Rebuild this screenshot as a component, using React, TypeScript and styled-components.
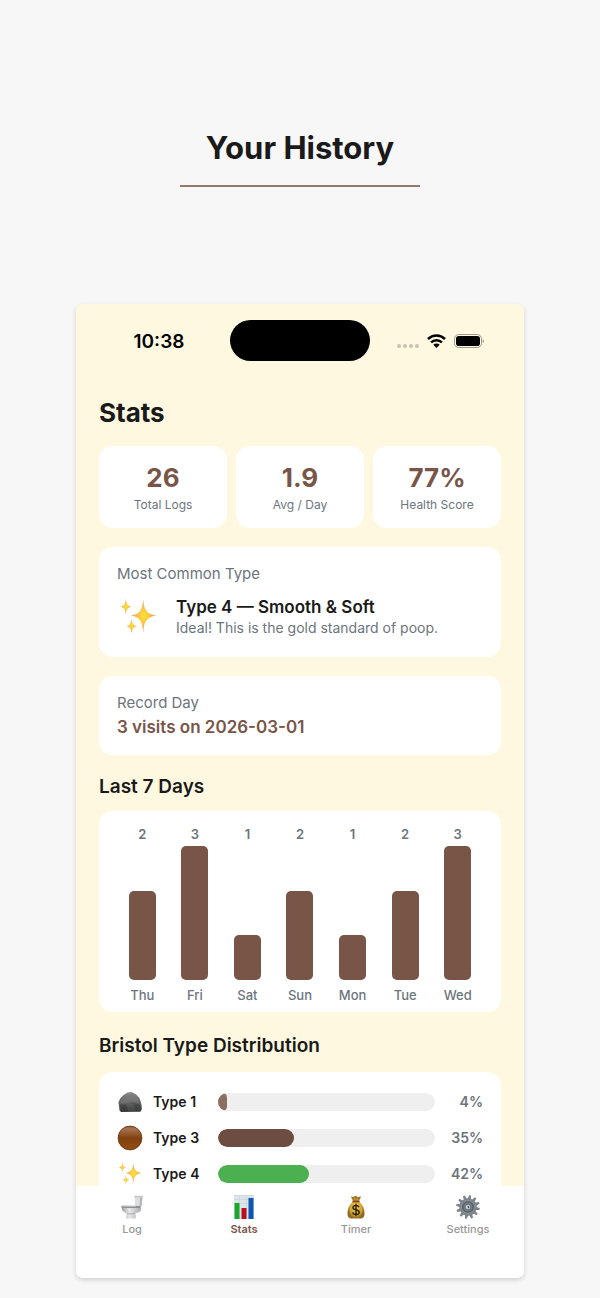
import React from 'react';
import styled, { createGlobalStyle } from 'styled-components';

const GlobalStyle = createGlobalStyle`
  *, *::before, *::after {
    box-sizing: border-box;
  }
  body {
    margin: 0;
    background: #f7f7f7;
    color: #1a1a1a;
    font-family: Inter, 'Liberation Sans', sans-serif;
  }
`;

const Page = styled.main`
  display: flex;
  flex-direction: column;
  align-items: center;
  min-height: 100vh;
  padding: 128px 76px 20px;
`;
const PageTitle = styled.h1`
  margin: 0;
  font-size: 31px;
  line-height: 40px;
  font-weight: 700;
`;
const Rule = styled.div`
  width: 240px;
  height: 2px;
  margin: 17px 0 117px;
  background: #95776b;
`;
const Phone = styled.section`
  width: 100%;
  max-width: 520px;
  border-radius: 7px;
  background: #fff8e1;
  box-shadow: 0 2px 5px rgba(0, 0, 0, 0.16);
  overflow: hidden;
`;

const StatusBar = styled.div`
  display: grid;
  grid-template-columns: 1fr 140px 1fr;
  align-items: center;
  padding-top: 16px;
`;
const Clock = styled.span`
  padding: 2px 0 0 12px;
  color: #000;
  font-size: 19px;
  line-height: 24px;
  font-weight: 600;
  text-align: center;
`;
const Island = styled.div`
  height: 41px;
  border-radius: 21px;
  background: #000;
`;
const StatusIcons = styled.div`
  display: flex;
  align-items: center;
  justify-content: flex-end;
  gap: 8px;
  padding-right: 40px;

  svg {
    display: block;
  }
`;

const Content = styled.div`
  padding: 36px 23px 0;
`;
const ScreenTitle = styled.h2`
  margin: 0 0 17px;
  font-size: 26px;
  line-height: 32px;
  font-weight: 700;
`;
const Summary = styled.div`
  display: grid;
  grid-template-columns: repeat(3, 1fr);
  gap: 9px;
`;
const SummaryCard = styled.div`
  display: flex;
  flex-direction: column;
  align-items: center;
  gap: 2px;
  padding: 16px 0 14px;
  border-radius: 14px;
  background: #fff;
`;
const SummaryValue = styled.strong`
  color: #795548;
  font-size: 26px;
  line-height: 32px;
  font-weight: 700;
`;
const SummaryLabel = styled.span`
  color: #6c757d;
  font-size: 12px;
  line-height: 18px;
`;

const Card = styled.div`
  margin-top: 19px;
  padding: 17px 18px;
  border-radius: 14px;
  background: #fff;
`;
const CardLabel = styled.div`
  color: #6c757d;
  font-size: 15px;
  line-height: 20px;
`;
const Common = styled.div`
  display: flex;
  align-items: center;
  gap: 17px;
  padding: 12px 0 2px;
`;
const CommonIcon = styled.div`
  display: flex;
  justify-content: center;
  width: 42px;

  svg {
    display: block;
  }
`;
const CommonTitle = styled.div`
  font-size: 17px;
  line-height: 22px;
  font-weight: 600;
`;
const CommonText = styled.div`
  color: #6c757d;
  font-size: 14px;
  line-height: 20px;
`;
const RecordText = styled.div`
  margin-top: 3px;
  color: #795548;
  font-size: 17px;
  line-height: 22px;
  font-weight: 600;
`;

const Heading = styled.h3<{ $space: number }>`
  margin: ${p => p.$space}px 0 ${p => p.$space - 8}px;
  font-size: 19px;
  line-height: 24px;
  font-weight: 600;
`;

const Chart = styled.div`
  display: grid;
  grid-template-columns: repeat(7, 1fr);
  padding: 15px 17px 9px;
  border-radius: 14px;
  background: #fff;
`;
const Day = styled.div`
  display: flex;
  flex-direction: column;
  align-items: center;
  color: #6c757d;
  font-size: 13px;
  line-height: 16px;
  font-weight: 500;
`;
const DayCount = styled.span`
  font-weight: 600;
`;
const Plot = styled.div`
  display: flex;
  align-items: flex-end;
  height: 134px;
  margin: 4px 0 7px;
`;
const Bar = styled.div`
  width: 27px;
  border-radius: 5px;
  background: #795548;
`;

const Distribution = styled.div`
  display: flex;
  flex-direction: column;
  gap: 12px;
  padding: 18px 18px 0;
  border-radius: 14px 14px 0 0;
  background: #fff;
`;
const TypeRow = styled.div`
  display: grid;
  grid-template-columns: 26px 55px 1fr 38px;
  grid-template-rows: 24px;
  gap: 10px;
  align-items: center;

  svg {
    display: block;
    margin: 0 auto;
  }
`;
const TypeName = styled.span`
  font-size: 14px;
  line-height: 20px;
  font-weight: 600;
  white-space: nowrap;
`;
const Track = styled.div`
  height: 18px;
  border-radius: 9px;
  background: #efefef;
  overflow: hidden;
`;
const Fill = styled.div<{ $color: string }>`
  height: 100%;
  border-radius: 9px;
  background: ${p => p.$color};
`;
const Percent = styled.span`
  color: #6c757d;
  font-size: 14px;
  line-height: 20px;
  font-weight: 600;
  text-align: right;
`;

const TabBar = styled.nav`
  display: grid;
  grid-template-columns: repeat(4, 1fr);
  padding: 9px 0 41px;
  background: #fff;
`;
const Tab = styled.button<{ $active?: boolean }>`
  display: flex;
  flex-direction: column;
  align-items: center;
  gap: 2px;
  padding: 0;
  border: 0;
  background: none;
  color: ${p => (p.$active ? '#795548' : '#999')};
  font-family: inherit;
  font-size: 11px;
  line-height: 16px;
  font-weight: ${p => (p.$active ? 600 : 500)};
  cursor: pointer;
`;

const SignalDots = () => (
  <svg width="22" height="14" viewBox="0 0 22 14" fill="#cbc3b0">
    <circle cx="2" cy="12" r="2" />
    <circle cx="8" cy="12" r="2" />
    <circle cx="14" cy="12" r="2" />
    <circle cx="20" cy="12" r="2" />
  </svg>
);

const Wifi = () => (
  <svg width="19" height="14" viewBox="0 0 19 14">
    <g fill="none" stroke="#000" strokeWidth="2.5">
      <path d="M1 5a12.200 12.200 0 0 1 17 0" />
      <path d="M4.100 8.400a7.700 7.700 0 0 1 10.800 0" />
    </g>
    <path d="M9.500 13.900L6.300 10.800a4.600 4.600 0 0 1 6.400 0z" />
  </svg>
);

const Battery = () => (
  <svg width="30" height="14" viewBox="0 0 30 14">
    <rect x=".5" y=".5" width="27" height="13" rx="4.2" fill="none" stroke="#9e9a8d" />
    <rect x="2" y="2" width="24" height="10" rx="2.8" />
    <path d="M28.7 4.9q1.3.7 1.3 2.1t-1.3 2.1z" fill="#9e9a8d" />
  </svg>
);

const Sparkles = ({ size }: { size: number }) => (
  <svg width={size} height={size} viewBox="0 0 40 40">
    <defs>
      <radialGradient id="spark">
        <stop offset="0" stopColor="#fbdf3c" />
        <stop offset=".35" stopColor="#fbcd3f" />
        <stop offset=".8" stopColor="#f2a566" />
        <stop offset="1" stopColor="#eea582" />
      </radialGradient>
    </defs>
    <g fill="url(#spark)">
      <path d="M25.500 1C26.300 11 28 16.800 39.500 18.500C28 20.200 26.300 26 25.500 36.500C24.700 26 23 20.200 12.500 18.500C23 16.800 24.700 11 25.500 1Z" />
      <path d="M7.200 .5C7.700 6 8.800 8.400 13.500 9.200C8.800 10 7.700 12.400 7.200 17.800C6.700 12.400 5.600 10 1.200 9.200C5.600 8.400 6.700 6 7.200 .5Z" />
      <path d="M13.200 21.500C13.700 26.500 14.800 28.900 19.500 29.700C14.800 30.500 13.700 32.900 13.200 37.500C12.700 32.900 11.600 30.500 7.500 29.700C11.600 28.900 12.700 26.500 13.200 21.500Z" />
    </g>
  </svg>
);

const Rock = () => (
  <svg width="24" height="24" viewBox="0 0 24 24">
    <defs>
      <linearGradient id="rock" x1="0" y1="0" x2="0" y2="1">
        <stop offset="0" stopColor="#8c8c8c" />
        <stop offset=".5" stopColor="#626262" />
        <stop offset="1" stopColor="#3e3f3f" />
      </linearGradient>
    </defs>
    <path d="M1 16L.4 12.300L2.500 8L5.500 5L9.500 2.400L13.500 2L18 4.200L21.500 8L23.500 14.500L23.900 19L22.500 21.800L3 22L1.500 20.500Z" fill="url(#rock)" />
    <path d="M1 13L7 13.500L15 12L22 13.500L20 8L15 4L8 7Z" fill="#7d7d7d" opacity=".5" />
    <path d="M2 15L8 14.500L10 21.500L4 21.500Z" fill="#303131" opacity=".5" />
    <path d="M15 13L22 15L22 21L18 21.500Z" fill="#343535" opacity=".4" />
  </svg>
);

const BrownCircle = () => (
  <svg width="26" height="26" viewBox="0 0 26 26">
    <defs>
      <linearGradient id="brown" x1="0" y1="0" x2="0" y2="1">
        <stop offset="0" stopColor="#8e5a39" />
        <stop offset=".12" stopColor="#a87350" />
        <stop offset=".5" stopColor="#80420f" />
        <stop offset="1" stopColor="#974b12" />
      </linearGradient>
    </defs>
    <circle cx="13" cy="13" r="11.900" fill="url(#brown)" stroke="#64310f" strokeWidth=".8" />
  </svg>
);

const Toilet = () => (
  <svg width="24" height="24" viewBox="0 0 24 24">
    <defs>
      <linearGradient id="bowl" x1="0" y1="0" x2="1" y2="0">
        <stop offset="0" stopColor="#9a9a9c" />
        <stop offset=".4" stopColor="#e8e8ea" />
        <stop offset="1" stopColor="#ababae" />
      </linearGradient>
    </defs>
    <path d="M15 1.500L22.500 1L21.500 11.500H15Z" fill="#dcdee1" />
    <path d="M14.300 .8H23.200V2.500H14.300Z" fill="#c6c8cc" />
    <path d="M20 2.500H22.500L21.500 11.500H19.500Z" fill="#b4b6ba" />
    <path d="M1.500 12.500H21V15Q20 17.500 15.500 18.300L16 23.500H6L6.800 18.500Q2.200 17 1.500 12.500Z" fill="url(#bowl)" />
    <path d="M7 18.500Q11 19.400 15 18.500" fill="none" stroke="#98989a" strokeWidth=".7" />
    <path d="M1.200 12Q1 10.600 3 10.500L20.500 11V13H3Q1.500 13 1.200 12Z" fill="#8f9093" />
    <path d="M3 11H16" stroke="#e7e7e9" strokeWidth=".9" />
  </svg>
);

const ChartIcon = () => (
  <svg width="24" height="24" viewBox="0 0 24 24">
    <rect x="2" y="0" width="20" height="24" fill="#dce4ea" />
    <path d="M2 .5H22M2 4.500H22M2 8.500H22M7.500 0V24M14.500 0V24" stroke="#c9d4dc" strokeWidth=".6" />
    <rect x="2.500" y="8" width="5" height="16" fill="#1ba72b" />
    <rect x="9.500" y="13" width="5" height="11" fill="#bd0b20" />
    <rect x="16.500" y="3" width="5" height="21" fill="#0c57b3" />
  </svg>
);

const MoneyBag = () => (
  <svg width="24" height="24" viewBox="0 0 24 24">
    <defs>
      <radialGradient id="bag">
        <stop offset="0" stopColor="#f0cf55" />
        <stop offset=".7" stopColor="#d0a332" />
        <stop offset="1" stopColor="#8e6820" />
      </radialGradient>
    </defs>
    <path d="M7 1.500L9.500 2L11.500 .8L14 2L17 1.500L15 6.500Q20.500 11 20.500 18.500Q20.500 23.500 16.500 23.500H7.500Q3.500 23.500 3.500 18.500Q3.500 11 9 6.500Z" fill="url(#bag)" />
    <path d="M8.500 2.500L10.500 6M12 2V6M15.500 2.500L13.500 6" stroke="#8a6224" strokeWidth=".8" />
    <path d="M8.500 6.500H15.500" stroke="#8b3a28" strokeWidth="1.600" />
    <path d="M15 12.200C14.500 10.900 13.300 10.500 12 10.500C10.200 10.500 9 11.400 9 12.700C9 15.600 15.200 13.900 15.200 17.200C15.200 18.700 13.800 19.500 12 19.500C10.300 19.500 9 18.900 8.700 17.400M12 8.800V21.200" fill="none" stroke="#33270e" strokeWidth="1.500" />
  </svg>
);

const teeth = Array.from({ length: 12 }, (_, i) => i * 30);

const Gear = () => (
  <svg width="24" height="24" viewBox="0 0 24 24">
    {teeth.map(angle => (
      <path key={angle} d="M10.300 4.500L11 .2H13L13.700 4.500Z" fill="#7d848c" transform={`rotate(${angle + 10} 12 12)`} />
    ))}
    <circle cx="12" cy="12" r="7.600" fill="#a9b0b6" stroke="#7b838b" strokeWidth="2.200" />
    <circle cx="12" cy="12" r="5.300" fill="#78818a" stroke="#555d66" strokeWidth="1.600" />
    <circle cx="12" cy="12" r="2.800" fill="#dde1e4" stroke="#48515b" strokeWidth=".8" />
    <path d="M11.500 10.200L13.700 12L11.800 13.800Z" fill="#39434d" />
  </svg>
);

const summary = [
  { value: '26', label: 'Total Logs' },
  { value: '1.9', label: 'Avg / Day' },
  { value: '77%', label: 'Health Score' },
];

const days = [
  { name: 'Thu', count: 2 },
  { name: 'Fri', count: 3 },
  { name: 'Sat', count: 1 },
  { name: 'Sun', count: 2 },
  { name: 'Mon', count: 1 },
  { name: 'Tue', count: 2 },
  { name: 'Wed', count: 3 },
];
const maxCount = 3;
const maxBarHeight = 134;

const types = [
  { name: 'Type 1', percent: 4, color: '#8d6e63', icon: <Rock /> },
  { name: 'Type 3', percent: 35, color: '#6d4c41', icon: <BrownCircle /> },
  { name: 'Type 4', percent: 42, color: '#4caf50', icon: <Sparkles size={24} /> },
];

const tabs = [
  { name: 'Log', icon: <Toilet /> },
  { name: 'Stats', icon: <ChartIcon />, active: true },
  { name: 'Timer', icon: <MoneyBag /> },
  { name: 'Settings', icon: <Gear /> },
];

export const App: React.FC = () => {

  return (
    <React.Fragment>
      <GlobalStyle />
      <Page>
        <PageTitle>Your History</PageTitle>
        <Rule />
        <Phone>
          <StatusBar>
            <Clock>10:38</Clock>
            <Island />
            <StatusIcons>
              <SignalDots />
              <Wifi />
              <Battery />
            </StatusIcons>
          </StatusBar>
          <Content>
            <ScreenTitle>Stats</ScreenTitle>
            <Summary>
              {summary.map(item => (
                <SummaryCard key={item.label}>
                  <SummaryValue>{item.value}</SummaryValue>
                  <SummaryLabel>{item.label}</SummaryLabel>
                </SummaryCard>
              ))}
            </Summary>
            <Card>
              <CardLabel>Most Common Type</CardLabel>
              <Common>
                <CommonIcon>
                  <Sparkles size={38} />
                </CommonIcon>
                <div>
                  <CommonTitle>Type 4 — Smooth &amp; Soft</CommonTitle>
                  <CommonText>Ideal! This is the gold standard of poop.</CommonText>
                </div>
              </Common>
            </Card>
            <Card>
              <CardLabel>Record Day</CardLabel>
              <RecordText>3 visits on 2026-03-01</RecordText>
            </Card>
            <Heading $space={20}>Last 7 Days</Heading>
            <Chart>
              {days.map(day => (
                <Day key={day.name}>
                  <DayCount>{day.count}</DayCount>
                  <Plot>
                    <Bar style={{ height: Math.round((maxBarHeight * day.count) / maxCount) }} />
                  </Plot>
                  {day.name}
                </Day>
              ))}
            </Chart>
            <Heading $space={22}>Bristol Type Distribution</Heading>
            <Distribution>
              {types.map(type => (
                <TypeRow key={type.name}>
                  {type.icon}
                  <TypeName>{type.name}</TypeName>
                  <Track>
                    <Fill $color={type.color} style={{ width: `${type.percent}%` }} />
                  </Track>
                  <Percent>{type.percent}%</Percent>
                </TypeRow>
              ))}
            </Distribution>
          </Content>
          <TabBar>
            {tabs.map(tab => (
              <Tab key={tab.name} type="button" $active={tab.active}>
                {tab.icon}
                {tab.name}
              </Tab>
            ))}
          </TabBar>
        </Phone>
      </Page>
    </React.Fragment>
  );
}

export default App;
